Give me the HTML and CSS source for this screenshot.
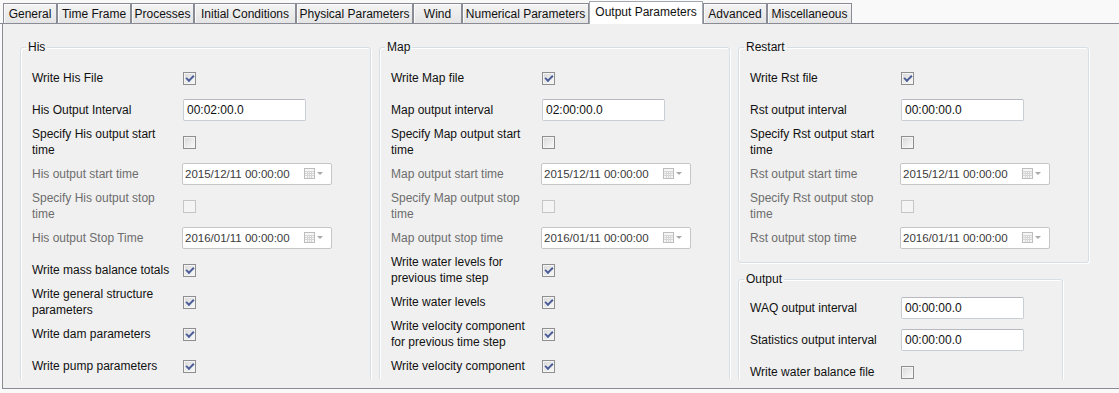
FILE: index.html
```html
<!DOCTYPE html>
<html lang="en">
<head>
    <meta charset="UTF-8">
    <title>Output Parameters</title>
    <link rel="stylesheet" href="styles.css">
</head>
<body>

    <div class="tabs">
        <div class="tab">General</div>
        <div class="tab">Time Frame</div>
        <div class="tab">Processes</div>
        <div class="tab">Initial Conditions</div>
        <div class="tab">Physical Parameters</div>
        <div class="tab">Wind</div>
        <div class="tab">Numerical Parameters</div>
        <div class="tab active">Output Parameters</div>
        <div class="tab">Advanced</div>
        <div class="tab">Miscellaneous</div>
    </div>

    <div class="panel">
        <div class="viewport">

            <fieldset class="group tall">
                <legend>His</legend>
                <div class="row"><span class="label">Write His File</span><span class="check on"></span></div>
                <div class="row"><span class="label">His Output Interval</span><div class="field">00:02:00.0</div></div>
                <div class="row"><span class="label">Specify His output start time</span><span class="check"></span></div>
                <div class="row off"><span class="label">His output start time</span>
                    <div class="date">2015/12/11 00:00:00
                        <svg width="20" height="12" viewBox="0 0 20 12"><rect x="0.5" y="0.5" width="10" height="10" fill="#f6f6f6" stroke="#bdbdbd"/><path d="M1 3.5h9M1 5.5h9M1 7.5h9M3.5 3v7M5.5 3v7M7.5 3v7" stroke="#d6d6d6"/><path d="M13 4h6l-3 3z" fill="#a9a9a9"/></svg>
                    </div>
                </div>
                <div class="row off"><span class="label">Specify His output stop time</span><span class="check dis"></span></div>
                <div class="row off"><span class="label">His output Stop Time</span>
                    <div class="date">2016/01/11 00:00:00
                        <svg width="20" height="12" viewBox="0 0 20 12"><rect x="0.5" y="0.5" width="10" height="10" fill="#f6f6f6" stroke="#bdbdbd"/><path d="M1 3.5h9M1 5.5h9M1 7.5h9M3.5 3v7M5.5 3v7M7.5 3v7" stroke="#d6d6d6"/><path d="M13 4h6l-3 3z" fill="#a9a9a9"/></svg>
                    </div>
                </div>
                <div class="row"><span class="label">Write mass balance totals</span><span class="check on"></span></div>
                <div class="row"><span class="label">Write general structure parameters</span><span class="check on"></span></div>
                <div class="row"><span class="label">Write dam parameters</span><span class="check on"></span></div>
                <div class="row"><span class="label">Write pump parameters</span><span class="check on"></span></div>
            </fieldset>

            <fieldset class="group tall">
                <legend>Map</legend>
                <div class="row"><span class="label">Write Map file</span><span class="check on"></span></div>
                <div class="row"><span class="label">Map output interval</span><div class="field">02:00:00.0</div></div>
                <div class="row"><span class="label">Specify Map output start time</span><span class="check"></span></div>
                <div class="row off"><span class="label">Map output start time</span>
                    <div class="date">2015/12/11 00:00:00
                        <svg width="20" height="12" viewBox="0 0 20 12"><rect x="0.5" y="0.5" width="10" height="10" fill="#f6f6f6" stroke="#bdbdbd"/><path d="M1 3.5h9M1 5.5h9M1 7.5h9M3.5 3v7M5.5 3v7M7.5 3v7" stroke="#d6d6d6"/><path d="M13 4h6l-3 3z" fill="#a9a9a9"/></svg>
                    </div>
                </div>
                <div class="row off"><span class="label">Specify Map output stop time</span><span class="check dis"></span></div>
                <div class="row off"><span class="label">Map output stop time</span>
                    <div class="date">2016/01/11 00:00:00
                        <svg width="20" height="12" viewBox="0 0 20 12"><rect x="0.5" y="0.5" width="10" height="10" fill="#f6f6f6" stroke="#bdbdbd"/><path d="M1 3.5h9M1 5.5h9M1 7.5h9M3.5 3v7M5.5 3v7M7.5 3v7" stroke="#d6d6d6"/><path d="M13 4h6l-3 3z" fill="#a9a9a9"/></svg>
                    </div>
                </div>
                <div class="row"><span class="label">Write water levels for previous time step</span><span class="check on"></span></div>
                <div class="row"><span class="label">Write water levels</span><span class="check on"></span></div>
                <div class="row"><span class="label">Write velocity component for previous time step</span><span class="check on"></span></div>
                <div class="row"><span class="label">Write velocity component</span><span class="check on"></span></div>
            </fieldset>

            <div class="stack">
                <fieldset class="group restart">
                    <legend>Restart</legend>
                    <div class="row"><span class="label">Write Rst file</span><span class="check on"></span></div>
                    <div class="row"><span class="label">Rst output interval</span><div class="field">00:00:00.0</div></div>
                    <div class="row"><span class="label">Specify Rst output start time</span><span class="check"></span></div>
                    <div class="row off"><span class="label">Rst output start time</span>
                        <div class="date">2015/12/11 00:00:00
                            <svg width="20" height="12" viewBox="0 0 20 12"><rect x="0.5" y="0.5" width="10" height="10" fill="#f6f6f6" stroke="#bdbdbd"/><path d="M1 3.5h9M1 5.5h9M1 7.5h9M3.5 3v7M5.5 3v7M7.5 3v7" stroke="#d6d6d6"/><path d="M13 4h6l-3 3z" fill="#a9a9a9"/></svg>
                        </div>
                    </div>
                    <div class="row off"><span class="label">Specify Rst output stop time</span><span class="check dis"></span></div>
                    <div class="row off"><span class="label">Rst output stop time</span>
                        <div class="date">2016/01/11 00:00:00
                            <svg width="20" height="12" viewBox="0 0 20 12"><rect x="0.5" y="0.5" width="10" height="10" fill="#f6f6f6" stroke="#bdbdbd"/><path d="M1 3.5h9M1 5.5h9M1 7.5h9M3.5 3v7M5.5 3v7M7.5 3v7" stroke="#d6d6d6"/><path d="M13 4h6l-3 3z" fill="#a9a9a9"/></svg>
                        </div>
                    </div>
                </fieldset>

                <fieldset class="group output">
                    <legend>Output</legend>
                    <div class="row"><span class="label">WAQ output interval</span><div class="field">00:00:00.0</div></div>
                    <div class="row"><span class="label">Statistics output interval</span><div class="field">00:00:00.0</div></div>
                    <div class="row"><span class="label">Write water balance file</span><span class="check"></span></div>
                </fieldset>
            </div>

        </div>
    </div>

</body>
</html>
```

FILE: styles.css
```css
body {
    margin: 0;
    font-family: "Liberation Sans", Arial, sans-serif;
    font-size: 12px;
    color: #111;
    background-color: #f9f9f9;
}

/* tab strip */

.tabs {
    display: flex;
    align-items: flex-end;
    height: 24px;
    padding-left: 3px;
    border-bottom: 1px solid #898c95;
    box-sizing: border-box;
}

.tab {
    height: 20px;
    line-height: 20px;
    text-align: center;
    white-space: nowrap;
    border: 1px solid #898c95;
    border-bottom: none;
    box-sizing: border-box;
    background: linear-gradient(#f4f4f4, #e4e4e4);
    box-shadow: inset 1px 1px 0 #fbfbfb;
}

.tab:nth-child(1) { width: 54px; }
.tab:nth-child(2) { width: 74px; }
.tab:nth-child(3) { width: 63px; }
.tab:nth-child(4) { width: 102px; }
.tab:nth-child(5) { width: 117px; }
.tab:nth-child(6) { width: 49px; }
.tab:nth-child(7) { width: 127px; }
.tab:nth-child(8) { width: 114px; }
.tab:nth-child(9) { width: 64px; }
.tab:nth-child(10) { width: 85px; }

.tab.active {
    height: 23px;
    line-height: 20px;
    margin-bottom: -1px;
    background: #fff;
    box-shadow: none;
    border-color: #a4a8b0;
    position: relative;
}

/* page body */

.panel {
    margin-left: 2px;
    height: 365px;
    padding-bottom: 9px;
    box-sizing: border-box;
    border-left: 1px solid #898c95;
    border-bottom: 1px solid #898c95;
    background-color: #f0f0f0;
}

.viewport {
    height: 100%;
    overflow: hidden;
    display: flex;
    align-items: flex-start;
    gap: 8px;
    padding: 16px 0 0 17px;
    box-sizing: border-box;
}

.group {
    margin: 0;
    min-width: 0;
    width: 351px;
    padding: 8px 0 8px 11px;
    box-sizing: border-box;
    border: 1px solid #d5dfe5;
    border-radius: 3px;
    box-shadow: inset 1px 1px 0 #fff, 1px 1px 0 #fff;
}

.group legend {
    padding: 0 2px;
    margin-left: -6px;
    line-height: 14px;
}

.stack {
    display: flex;
    flex-direction: column;
    gap: 9px;
}

.group.output {
    width: 325px;
    padding-top: 6px;
}

.row {
    display: flex;
    align-items: center;
    height: 32px;
}

.label {
    width: 142px;
    margin-right: 8px;
    line-height: 16px;
}

.row.off .label {
    color: #6d6d6d;
}

/* controls */

.check {
    width: 13px;
    height: 13px;
    margin-left: 1px;
    box-sizing: border-box;
    border: 1px solid #8e8f8f;
    background: linear-gradient(135deg, #d8d8d8, #fbfbfb);
    box-shadow: inset 0 0 0 1px #f4f4f4;
    position: relative;
}

.check.on::after {
    content: "";
    position: absolute;
    left: 2px;
    top: 2px;
    width: 6px;
    height: 3px;
    border-left: 2px solid #4b5e98;
    border-bottom: 2px solid #4b5e98;
    transform: rotate(-45deg);
}

.check.dis {
    border-color: #c6c6c6;
    background: #f4f4f4;
    box-shadow: none;
}

.field {
    width: 123px;
    height: 22px;
    margin-left: 1px;
    padding-left: 3px;
    line-height: 20px;
    box-sizing: border-box;
    border: 1px solid #c9ced4;
    border-top-color: #b6bac0;
    border-radius: 2px;
    background-color: #fff;
}

.date {
    display: flex;
    align-items: center;
    width: 150px;
    height: 22px;
    padding-left: 2px;
    box-sizing: border-box;
    border: 1px solid #c6c6c6;
    border-radius: 2px;
    background-color: #fff;
    color: #3a3a3a;
    font-size: 11.5px;
}

.date svg {
    margin-left: auto;
    margin-right: 7px;
}
```
